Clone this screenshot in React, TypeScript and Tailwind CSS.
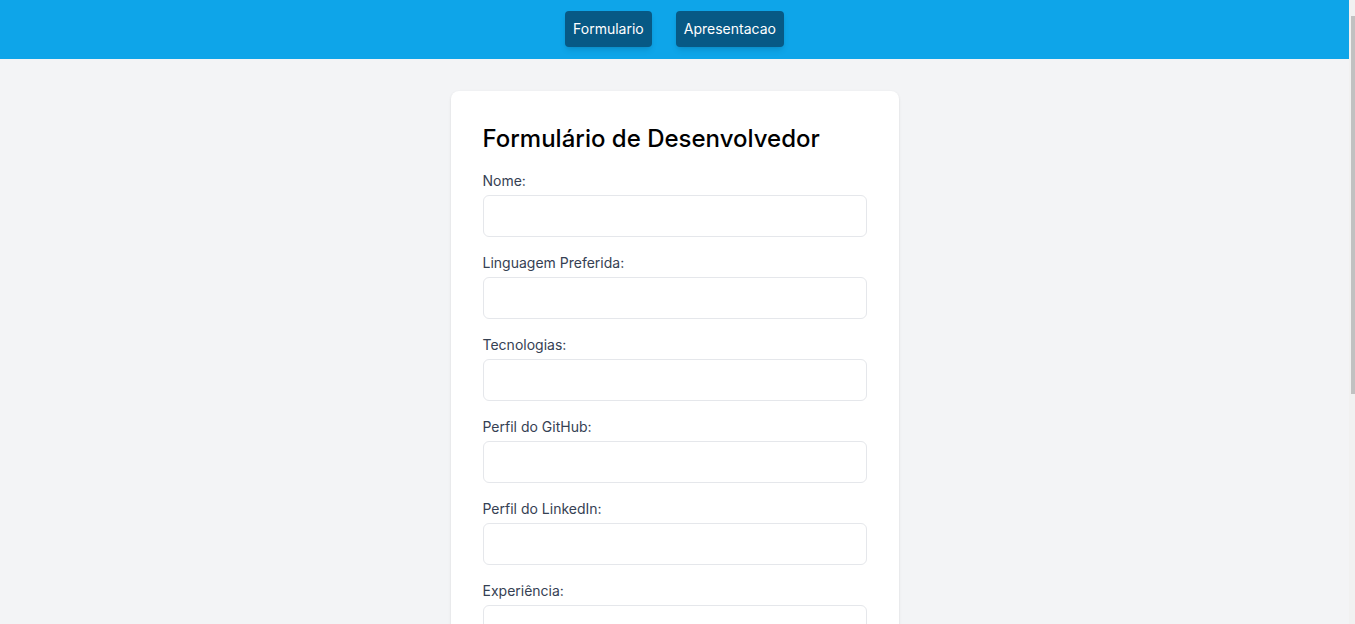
import React from "react";

const fields = [
  { label: "Nome:", name: "nome" },
  { label: "Linguagem Preferida:", name: "linguagem" },
  { label: "Tecnologias:", name: "tecnologias" },
  { label: "Perfil do GitHub:", name: "github" },
  { label: "Perfil do LinkedIn:", name: "linkedin" },
  { label: "Experiência:", name: "experiencia" },
];

export default function App() {
  const [page, setPage] = React.useState("form");

  return (
    <div className="flex h-screen overflow-hidden bg-gray-100 font-['Inter',sans-serif]">
      <div className="flex-1 overflow-hidden">
        <nav className="flex items-center justify-center gap-6 bg-[#0ea5e9] pt-[11px] pb-[12px]">
          <button
            className="rounded bg-[#075985] px-2 py-2 text-sm text-white shadow-md"
            onClick={() => setPage("form")}
          >
            Formulario
          </button>
          <button
            className="rounded bg-[#075985] px-2 py-2 text-sm text-white shadow-md"
            onClick={() => setPage("apresentacao")}
          >
            Apresentacao
          </button>
        </nav>

        <div className="mx-auto mt-8 max-w-md rounded-lg bg-white p-8 shadow-sm">
          <h1 className="mb-4 text-2xl font-medium text-black">
            Formulário de Desenvolvedor
          </h1>
          <form onSubmit={(e) => e.preventDefault()}>
            {fields.map((f) => (
              <div key={f.name} className="mb-4">
                <label className="mb-1 block text-sm text-gray-700">
                  {f.label}
                </label>
                <input
                  type="text"
                  name={f.name}
                  className="block w-full rounded-md border border-gray-200 px-3 py-2 outline-none"
                />
              </div>
            ))}
          </form>
        </div>
      </div>
      {/* fake scrollbar */}
      <div className="w-[6px] bg-[#f1f1f1] pt-[16px] pb-[230px]">
        <div className="ml-auto h-full w-[4px] bg-[#c1c1c1]" />
      </div>
    </div>
  );
}
